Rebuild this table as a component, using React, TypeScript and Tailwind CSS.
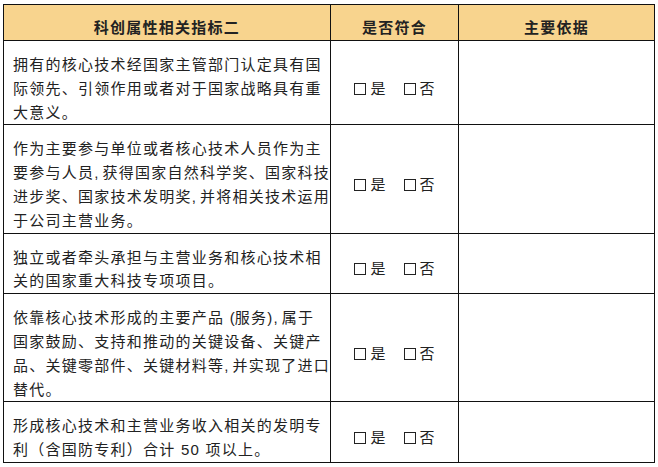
import React from "react";

const rows: string[][] = [
  ["拥有的核心技术经国家主管部门认定具有国", "际领先、引领作用或者对于国家战略具有重", "大意义。"],
  [
    "作为主要参与单位或者核心技术人员作为主",
    "要参与人员, 获得国家自然科学奖、国家科技",
    "进步奖、国家技术发明奖, 并将相关技术运用",
    "于公司主营业务。",
  ],
  ["独立或者牵头承担与主营业务和核心技术相", "关的国家重大科技专项项目。"],
  [
    "依靠核心技术形成的主要产品 (服务), 属于",
    "国家鼓励、支持和推动的关键设备、关键产",
    "品、关键零部件、关键材料等, 并实现了进口",
    "替代。",
  ],
  ["形成核心技术和主营业务收入相关的发明专", "利（含国防专利）合计 50 项以上。"],
];

// half-width punctuation sits tighter than the CJK glyphs around it
function Line({ text }: { text: string }) {
  const parts = text.split(/(, |\(|\) )/);
  return (
    <div>
      {parts.map((p, k) =>
        p === ", " || p === "(" || p === ") " ? (
          <span key={k} className="tracking-normal">{p}</span>
        ) : (
          <span key={k}>{p}</span>
        )
      )}
    </div>
  );
}

function Check({ label }: { label: string }) {
  return (
    <span className="inline-flex items-center">
      <span className="inline-block w-[12px] h-[12px] border border-[#222] mr-[4px]" />
      <span>{label}</span>
    </span>
  );
}

export default function App() {
  return (
    <div className="w-[658px] h-[467px] bg-white pt-[4px] pl-[3px] overflow-hidden" style={{ fontFamily: '"Liberation Sans", "Noto Sans CJK SC", sans-serif' }}>
      <table className="border-collapse table-fixed w-[651px] text-[15px] text-[#222] tracking-[1.25px]">
        <colgroup>
          <col className="w-[327px]" />
          <col className="w-[128px]" />
          <col className="w-[196px]" />
        </colgroup>
        <thead>
          <tr className="bg-[#f8d48e]">
            <th className="border border-[#111] pt-[11px] pb-0 leading-[24px] font-bold text-center">科创属性相关指标二</th>
            <th className="border border-[#111] pt-[11px] pb-0 leading-[24px] font-bold text-center">是否符合</th>
            <th className="border border-[#111] pt-[11px] pb-0 leading-[24px] font-bold text-center">主要依据</th>
          </tr>
        </thead>
        <tbody>
          {rows.map((lines, i) => (
            <tr key={i}>
              <td className="border border-[#111] pl-[9px] pr-[4px] pt-[12px] pb-0 leading-[23.8px] align-top whitespace-nowrap">
                {lines.map((l, j) => (
                  <Line key={j} text={l} />
                ))}
              </td>
              <td className="border border-[#111] pt-[12px] align-middle text-center">
                <div className="flex justify-center gap-[18px] leading-[24px] tracking-normal">
                  <Check label="是" />
                  <Check label="否" />
                </div>
              </td>
              <td className="border border-[#111]" />
            </tr>
          ))}
        </tbody>
      </table>
    </div>
  );
}
